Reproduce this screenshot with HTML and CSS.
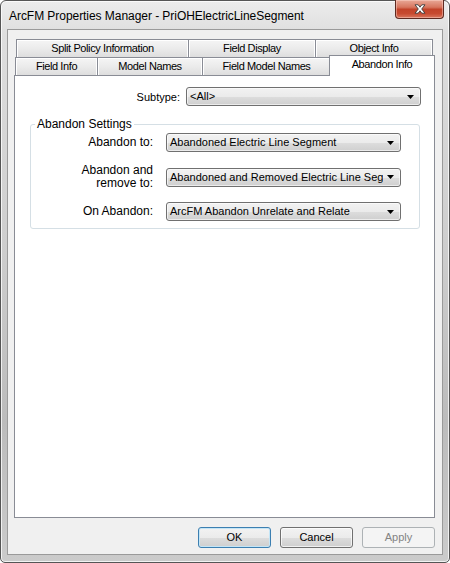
FILE: index.html
```html
<!DOCTYPE html>
<html lang="en">
<head>
<meta charset="utf-8">
<title>ArcFM Properties Manager</title>
<link rel="stylesheet" href="styles.css">
</head>
<body>
<div class="window">
  <div class="titlebar">
    <span class="title">ArcFM Properties Manager - PriOHElectricLineSegment</span>
    <div class="close">
      <svg width="12" height="10" viewBox="0 0 12 10"><path d="M1 0.8 L4.2 0.8 L6 3.2 L7.8 0.8 L11 0.8 L7.7 5 L11 9.2 L7.8 9.2 L6 6.8 L4.2 9.2 L1 9.2 L4.3 5 Z" fill="#fff" stroke="#3b3b3b" stroke-width="0.9" stroke-linejoin="round"/></svg>
    </div>
  </div>
  <div class="client">
    <div class="tabs">
      <div class="tabrow upper">
        <div class="tab t-split">Split Policy Information</div>
        <div class="tab t-display">Field Display</div>
        <div class="tab t-object">Object Info</div>
      </div>
      <div class="tabrow lower">
        <div class="tab t-field">Field Info</div>
        <div class="tab t-model">Model Names</div>
        <div class="tab t-fmodel">Field Model Names</div>
        <div class="tab t-abandon selected">Abandon Info</div>
      </div>
    </div>
    <div class="page">
      <div class="subtype-row">
        <span class="lbl-small">Subtype:</span>
        <div class="combo wide">
          <span class="val">&lt;All&gt;</span>
          <span class="arrow"><svg width="7" height="4" viewBox="0 0 7 4"><path d="M0 0 H7 L3.5 4 Z" fill="#000"/></svg></span>
        </div>
      </div>
      <fieldset class="group">
        <legend>Abandon Settings</legend>
        <div class="grid">
          <span class="lbl">Abandon to:</span>
          <div class="combo">
            <span class="val">Abandoned Electric Line Segment</span>
            <span class="arrow"><svg width="7" height="4" viewBox="0 0 7 4"><path d="M0 0 H7 L3.5 4 Z" fill="#000"/></svg></span>
          </div>
          <span class="lbl">Abandon and<br>remove to:</span>
          <div class="combo">
            <span class="val">Abandoned and Removed Electric Line Segment</span>
            <span class="arrow"><svg width="7" height="4" viewBox="0 0 7 4"><path d="M0 0 H7 L3.5 4 Z" fill="#000"/></svg></span>
          </div>
          <span class="lbl">On Abandon:</span>
          <div class="combo">
            <span class="val">ArcFM Abandon Unrelate and Relate</span>
            <span class="arrow"><svg width="7" height="4" viewBox="0 0 7 4"><path d="M0 0 H7 L3.5 4 Z" fill="#000"/></svg></span>
          </div>
        </div>
      </fieldset>
    </div>
    <div class="buttons">
      <div class="btn default">OK</div>
      <div class="btn">Cancel</div>
      <div class="btn disabled">Apply</div>
    </div>
  </div>
</div>
</body>
</html>
```
FILE: styles.css
```css
* { box-sizing: border-box; }
html, body { margin: 0; padding: 0; background: #fff; }
body {
  width: 450px;
  height: 563px;
  font-family: "Liberation Sans", Arial, sans-serif;
  font-size: 11px;
  color: #000;
}

.window {
  width: 450px;
  height: 563px;
  border: 1px solid #555;
  border-radius: 6px 6px 5px 5px;
  background: linear-gradient(to bottom, #ececec 0%, #dedede 6%, #cdcdcd 45%, #bcbcbc 75%, #cbcbcb 100%);
  box-shadow: inset 0 0 0 1px rgba(255,255,255,0.75);
  display: flex;
  flex-direction: column;
  padding: 0 6px 7px 6px;
}

.titlebar {
  height: 28px;
  display: flex;
  justify-content: space-between;
  align-items: flex-start;
}
.title {
  font-size: 12px;
  line-height: 14px;
  margin: 8px 0 0 2px;
  white-space: nowrap;
  letter-spacing: -0.05px;
}
.close {
  width: 49px;
  height: 19px;
  margin-right: -1px;
  margin-top: -1px;
  border: 1px solid #5e2a21;
  border-top: none;
  border-radius: 0 0 4px 4px;
  background: linear-gradient(to bottom, #e9a897 0%, #d7765f 40%, #c2432a 52%, #c74a30 75%, #d9765d 100%);
  box-shadow: inset 0 0 0 1px rgba(255,220,210,0.45);
  display: flex;
  align-items: center;
  justify-content: center;
}

.client {
  flex: 1;
  background: #f0f0f0;
  border: 1px solid #9a9a9a;
  display: flex;
  flex-direction: column;
  padding: 9px 7px 6px 6px;
}

.tabs { display: flex; flex-direction: column; }
.tabrow { display: flex; height: 18px; align-items: flex-end; }
.upper { padding-left: 2px; }
.lower { padding-left: 1px; }
.tab {
  height: 18px;
  border: 1px solid #898c95;
  border-bottom: none;
  background: linear-gradient(to bottom, #f5f5f5 0%, #ebebeb 50%, #dedede 100%);
  box-shadow: inset 1px 1px 0 #fff, inset -1px 0 0 #fff;
  text-align: center;
  line-height: 16px;
  letter-spacing: -0.4px;
  white-space: nowrap;
  overflow: hidden;
}
.tab + .tab { margin-left: -1px; }
.t-split { width: 173px; }
.t-display { width: 128px; }
.t-object { width: 118px; }
.t-field { width: 83px; }
.t-model { width: 106px; }
.t-fmodel { width: 129px; }
.tab.selected {
  width: 106px;
  height: 21px;
  margin-left: -2px;
  margin-bottom: -1px;
  background: #fff;
  box-shadow: none;
  position: relative;
  z-index: 1;
  line-height: 17px;
}

.page {
  flex: 1;
  background: #fff;
  border: 1px solid #898c95;
  padding: 11px 13px 0 15px;
}

.subtype-row {
  display: flex;
  justify-content: flex-end;
  align-items: center;
  gap: 6px;
}
.lbl-small { font-size: 11px; }

.combo {
  width: 235px;
  height: 19px;
  border: 1px solid #707070;
  border-radius: 3px;
  background: linear-gradient(to bottom, #f2f2f2 0%, #ebebeb 50%, #dddddd 51%, #cfcfcf 100%);
  box-shadow: inset 0 0 0 1px rgba(255,255,255,0.6);
  display: flex;
  align-items: center;
  font-size: 11px;
}
.combo .val {
  flex: 1;
  min-width: 0;
  overflow: hidden;
  white-space: nowrap;
  padding-left: 3px;
  line-height: 15px;
}
.combo .arrow {
  width: 17px;
  flex: none;
  display: flex;
  justify-content: center;
  align-items: center;
  padding-right: 2px;
}

.group {
  margin: 12px 1px 0 0;
  padding: 2px 18px 7px 4px;
  border: 1px solid #d5dfe5;
  border-radius: 3px;
  min-width: 0;
}
.group legend {
  font-size: 12px;
  line-height: 13px;
  padding: 0 2px;
  margin-left: 0;
}
.grid {
  display: grid;
  grid-template-columns: 1fr 235px;
  grid-template-rows: 19px 26px 19px;
  column-gap: 13px;
  row-gap: 12px;
  align-items: center;
}
.lbl {
  font-size: 12px;
  line-height: 13px;
  text-align: right;
}

.buttons {
  display: flex;
  justify-content: flex-end;
  gap: 9px;
  margin-top: 9px;
}
.btn {
  width: 73px;
  height: 21px;
  border: 1px solid #707070;
  border-radius: 3px;
  background: linear-gradient(to bottom, #f2f2f2 0%, #ebebeb 50%, #dddddd 51%, #cfcfcf 100%);
  box-shadow: inset 0 0 0 1px rgba(255,255,255,0.7);
  text-align: center;
  line-height: 19px;
  font-size: 11px;
}
.btn.default {
  border-color: #3c7fb1;
  box-shadow: inset 0 0 0 1px #c4e5f6;
}
.btn.disabled {
  border-color: #adb2b5;
  background: #f4f4f4;
  box-shadow: none;
  color: #838383;
}
```
